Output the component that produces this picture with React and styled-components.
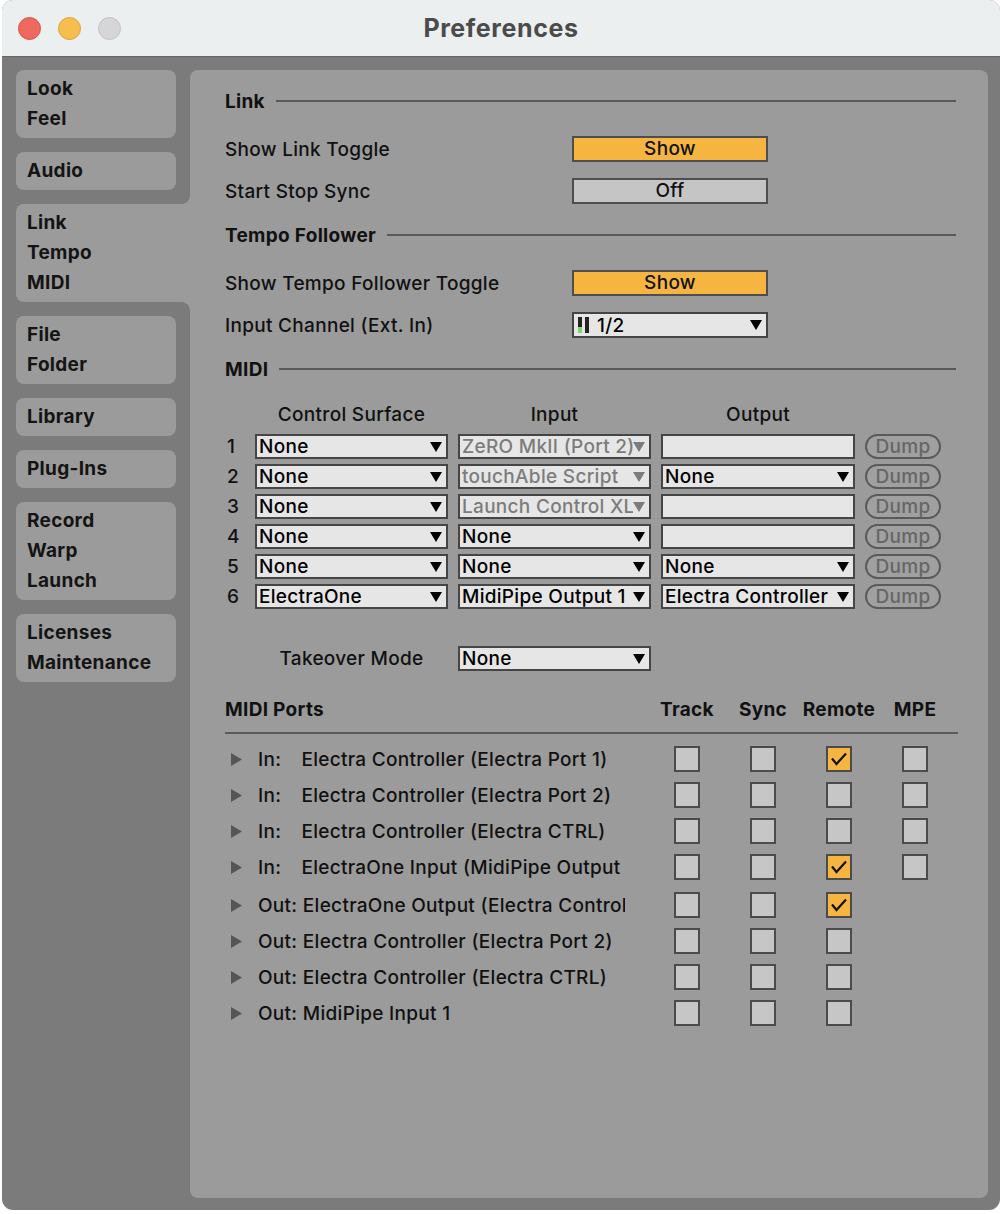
import React from 'react';
import styled, { createGlobalStyle } from 'styled-components';

const GlobalStyle = createGlobalStyle`
  html, body { margin: 0; padding: 0; background: #ffffff; }
  body { font-family: Inter, "Noto Sans", sans-serif; color: #111; font-weight: 500; letter-spacing: 0.3px; -webkit-font-smoothing: antialiased; }
  * { box-sizing: border-box; }
`;

const DARK = '#7b7b7b';
const PANEL = '#9b9b9b';
const ORANGE = '#f6b540';

const Window = styled.div`
  margin-left: 2px;
  width: 998px;
  height: 1210px;
  border-radius: 11px;
  overflow: hidden;
  background: ${DARK};
  display: flex;
  flex-direction: column;
`;

const TitleBar = styled.div`
  flex: none;
  height: 57px;
  background: #eceff0;
  border-bottom: 1px solid #666;
  display: grid;
  grid-template-columns: 1fr auto 1fr;
  align-items: center;
`;

const Lights = styled.div`
  display: flex;
  gap: 17px;
  padding-left: 16px;
`;

const Light = styled.span`
  width: 23px;
  height: 23px;
  border-radius: 50%;
  background: ${p => p.$c};
  border: 1px solid ${p => p.$b};
`;

const Title = styled.div`
  font-size: 25px;
  font-weight: 700;
  color: #4b4b4b;
  letter-spacing: 0.6px;
  padding-bottom: 1px;
`;

const Body = styled.div`
  flex: 1;
  display: flex;
  padding: 13px 12px 12px 14px;
`;

const Sidebar = styled.div`
  flex: none;
  width: 174px;
  display: flex;
  flex-direction: column;
  gap: 14px;
`;

const Tab = styled.div`
  position: relative;
  width: ${p => (p.$active ? '174px' : '160px')};
  background: ${PANEL};
  border-radius: ${p => (p.$active ? '8px 0 0 8px' : '8px')};
  padding: 4px 11px;
  font-size: 19px;
  font-weight: 700;
  line-height: 30px;
  color: #141414;
  letter-spacing: 0.3px;
  ${p =>
    p.$active &&
    `
    &::before, &::after {
      content: '';
      position: absolute;
      right: 0;
      width: 8px;
      height: 8px;
    }
    &::before {
      top: -8px;
      background: radial-gradient(circle at 0 0, ${DARK} 7.5px, ${PANEL} 8px);
    }
    &::after {
      bottom: -8px;
      background: radial-gradient(circle at 0 100%, ${DARK} 7.5px, ${PANEL} 8px);
    }
  `}
`;

const Panel = styled.div`
  flex: 1;
  background: ${PANEL};
  border-radius: 8px;
  padding: 16px 32px 0 35px;
  display: flex;
  flex-direction: column;
`;

const SectionHeader = styled.div`
  display: flex;
  align-items: center;
  gap: 11px;
  height: 30px;
  margin-top: ${p => p.$mt || 0}px;
  font-size: 19px;
  font-weight: 700;
  &::after {
    content: '';
    flex: 1;
    height: 2px;
    background: #5a5a5a;
  }
`;

const SettingRow = styled.div`
  display: grid;
  grid-template-columns: 347px 196px;
  align-items: center;
  height: 26px;
  margin-top: ${p => p.$mt || 0}px;
  font-size: 19px;
`;

const Toggle = styled.div`
  height: 26px;
  border: 2px solid #4e4e4e;
  background: ${p => (p.$on ? ORANGE : '#c5c5c5')};
  font-size: 19px;
  line-height: 22px;
  text-align: center;
`;

const DropBox = styled.div`
  height: ${p => p.$h || 25}px;
  display: flex;
  align-items: center;
  border: 2px solid #454545;
  background: #e6e6e6;
  padding: 0 4px 0 2px;
  font-size: 19px;
  color: ${p => (p.$disabled ? '#7c7c7c' : '#000')};
  overflow: hidden;
`;

const DropText = styled.span`
  flex: 1;
  min-width: 0;
  overflow: hidden;
  white-space: nowrap;
  line-height: 21px;
`;

const Arrow = () => (
  <svg width="12" height="10" viewBox="0 0 12 10" style={{ flex: 'none' }}>
    <polygon points="0,0 12,0 6,10" fill="currentColor" />
  </svg>
);

const Meter = styled.span`
  flex: none;
  display: flex;
  gap: 3px;
  margin: 0 8px 0 2px;
  height: 16px;
`;

const MeterBar = styled.span`
  width: 4px;
  height: 16px;
  background: ${p =>
    p.$level ? `linear-gradient(to bottom, #222 0 60%, #7ad46f 60% 100%)` : '#222'};
`;

const Dropdown = ({ children, disabled, noArrow, h, meter }) => (
  <DropBox $disabled={disabled} $h={h}>
    {meter && (
      <Meter>
        <MeterBar $level />
        <MeterBar />
      </Meter>
    )}
    <DropText>{children}</DropText>
    {!noArrow && <Arrow />}
  </DropBox>
);

const MidiGrid = styled.div`
  display: grid;
  grid-template-columns: 20px 193px 193px 194px 76px;
  grid-template-rows: 30px repeat(6, 25px);
  column-gap: 10px;
  row-gap: 5px;
  align-items: center;
  margin-top: 15px;
  font-size: 19px;
`;

const ColHeader = styled.div`
  text-align: center;
  font-size: 19px;
  grid-column: ${p => p.$col};
`;

const RowNum = styled.div`
  padding-left: 2px;
  font-size: 19px;
`;

const Dump = styled.div`
  height: 25px;
  border: 2px solid #5a5a5a;
  border-radius: 13px;
  background: #a0a0a0;
  color: #666;
  font-size: 19px;
  line-height: 21px;
  text-align: center;
`;

const TakeoverRow = styled.div`
  display: grid;
  grid-template-columns: 20px 193px 193px;
  column-gap: 10px;
  align-items: center;
  height: 25px;
  margin-top: 37px;
  font-size: 19px;
`;

const CenterLabel = styled.div`
  grid-column: 2;
  text-align: center;
`;

const PortsHeader = styled.div`
  display: grid;
  grid-template-columns: 33px 367px 24px repeat(4, 76px);
  align-items: center;
  height: 30px;
  margin-top: 23px;
  font-size: 19px;
  font-weight: 700;
`;

const PortsTitle = styled.div`
  grid-column: 1 / 4;
`;

const PortsColHead = styled.div`
  text-align: center;
`;

const Divider = styled.div`
  height: 2px;
  background: #5a5a5a;
  margin-top: 8px;
  margin-right: -2px;
`;

const PortList = styled.div`
  margin-top: 7px;
  display: flex;
  flex-direction: column;
`;

const PortRow = styled.div`
  display: grid;
  grid-template-columns: 33px 367px 24px repeat(4, 76px);
  align-items: center;
  height: 36px;
  margin-top: ${p => p.$mt || 0}px;
  font-size: 19px;
`;

const Expander = styled.span`
  display: flex;
  padding-left: 6px;
`;

const PortName = styled.div`
  overflow: hidden;
  white-space: nowrap;
`;

const Prefix = styled.span`
  display: inline-block;
  min-width: ${p => (p.$in ? '38px' : '0')};
`;

const Box = styled.div`
  grid-column: ${p => p.$col};
  justify-self: center;
  width: 26px;
  height: 26px;
  border: 2px solid #4b4b4b;
  background: ${p => (p.$checked ? ORANGE : '#c6c6c6')};
  display: flex;
`;

const Check = () => (
  <svg width="22" height="22" viewBox="0 0 22 22">
    <polyline points="4,10.5 8.5,16 18,5.5" fill="none" stroke="#111" strokeWidth="2.2" />
  </svg>
);

const tabs = [
  ['Look', 'Feel'],
  ['Audio'],
  ['Link', 'Tempo', 'MIDI'],
  ['File', 'Folder'],
  ['Library'],
  ['Plug-Ins'],
  ['Record', 'Warp', 'Launch'],
  ['Licenses', 'Maintenance'],
];

const midiRows = [
  { cs: 'None', inp: 'ZeRO MkII (Port 2)', inDis: true, out: null },
  { cs: 'None', inp: 'touchAble Script', inDis: true, out: 'None' },
  { cs: 'None', inp: 'Launch Control XL', inDis: true, out: null },
  { cs: 'None', inp: 'None', out: null },
  { cs: 'None', inp: 'None', out: 'None' },
  { cs: 'ElectraOne', inp: 'MidiPipe Output 1', out: 'Electra Controller' },
];

const ports = [
  { dir: 'In:', name: 'Electra Controller (Electra Port 1)', c: [0, 0, 1, 0] },
  { dir: 'In:', name: 'Electra Controller (Electra Port 2)', c: [0, 0, 0, 0] },
  { dir: 'In:', name: 'Electra Controller (Electra CTRL)', c: [0, 0, 0, 0] },
  { dir: 'In:', name: 'ElectraOne Input (MidiPipe Output 1)', c: [0, 0, 1, 0] },
  { dir: 'Out:', name: 'ElectraOne Output (Electra Controller)', c: [0, 0, 1], mt: 2 },
  { dir: 'Out:', name: 'Electra Controller (Electra Port 2)', c: [0, 0, 0] },
  { dir: 'Out:', name: 'Electra Controller (Electra CTRL)', c: [0, 0, 0] },
  { dir: 'Out:', name: 'MidiPipe Input 1', c: [0, 0, 0] },
];

export default function App() {
  return (
    <>
      <GlobalStyle />
      <Window>
        <TitleBar>
          <Lights>
            <Light $c="#ee6a5f" $b="#d8564b" />
            <Light $c="#f6be4f" $b="#dca43a" />
            <Light $c="#d6d6d8" $b="#c2c2c4" />
          </Lights>
          <Title>Preferences</Title>
          <div />
        </TitleBar>
        <Body>
          <Sidebar>
            {tabs.map((lines, i) => (
              <Tab key={i} $active={i === 2}>
                {lines.map(l => (
                  <div key={l}>{l}</div>
                ))}
              </Tab>
            ))}
          </Sidebar>
          <Panel>
            <SectionHeader>Link</SectionHeader>
            <SettingRow $mt={20}>
              <span>Show Link Toggle</span>
              <Toggle $on>Show</Toggle>
            </SettingRow>
            <SettingRow $mt={16}>
              <span>Start Stop Sync</span>
              <Toggle>Off</Toggle>
            </SettingRow>

            <SectionHeader $mt={16}>Tempo Follower</SectionHeader>
            <SettingRow $mt={20}>
              <span>Show Tempo Follower Toggle</span>
              <Toggle $on>Show</Toggle>
            </SettingRow>
            <SettingRow $mt={16}>
              <span>Input Channel (Ext. In)</span>
              <Dropdown h={26} meter>
                1/2
              </Dropdown>
            </SettingRow>

            <SectionHeader $mt={16}>MIDI</SectionHeader>
            <MidiGrid>
              <ColHeader $col={2}>Control Surface</ColHeader>
              <ColHeader $col={3}>Input</ColHeader>
              <ColHeader $col={4}>Output</ColHeader>
              <div />
              {midiRows.map((r, i) => (
                <React.Fragment key={i}>
                  <RowNum>{i + 1}</RowNum>
                  <Dropdown>{r.cs}</Dropdown>
                  <Dropdown disabled={r.inDis}>{r.inp}</Dropdown>
                  {r.out ? <Dropdown>{r.out}</Dropdown> : <Dropdown noArrow />}
                  <Dump>Dump</Dump>
                </React.Fragment>
              ))}
            </MidiGrid>

            <TakeoverRow>
              <CenterLabel>Takeover Mode</CenterLabel>
              <Dropdown>None</Dropdown>
            </TakeoverRow>

            <PortsHeader>
              <PortsTitle>MIDI Ports</PortsTitle>
              <PortsColHead>Track</PortsColHead>
              <PortsColHead>Sync</PortsColHead>
              <PortsColHead>Remote</PortsColHead>
              <PortsColHead>MPE</PortsColHead>
            </PortsHeader>
            <Divider />
            <PortList>
              {ports.map((p, i) => (
                <PortRow key={i} $mt={p.mt}>
                  <Expander>
                    <svg width="11" height="13" viewBox="0 0 11 13">
                      <polygon points="0,0 11,6.5 0,13" fill="#555" />
                    </svg>
                  </Expander>
                  <PortName>
                    <Prefix $in={p.dir === 'In:'}>{p.dir}</Prefix> {p.name}
                  </PortName>
                  {p.c.map((v, j) => (
                    <Box key={j} $col={4 + j} $checked={!!v}>
                      {v ? <Check /> : null}
                    </Box>
                  ))}
                </PortRow>
              ))}
            </PortList>
          </Panel>
        </Body>
      </Window>
    </>
  );
}
